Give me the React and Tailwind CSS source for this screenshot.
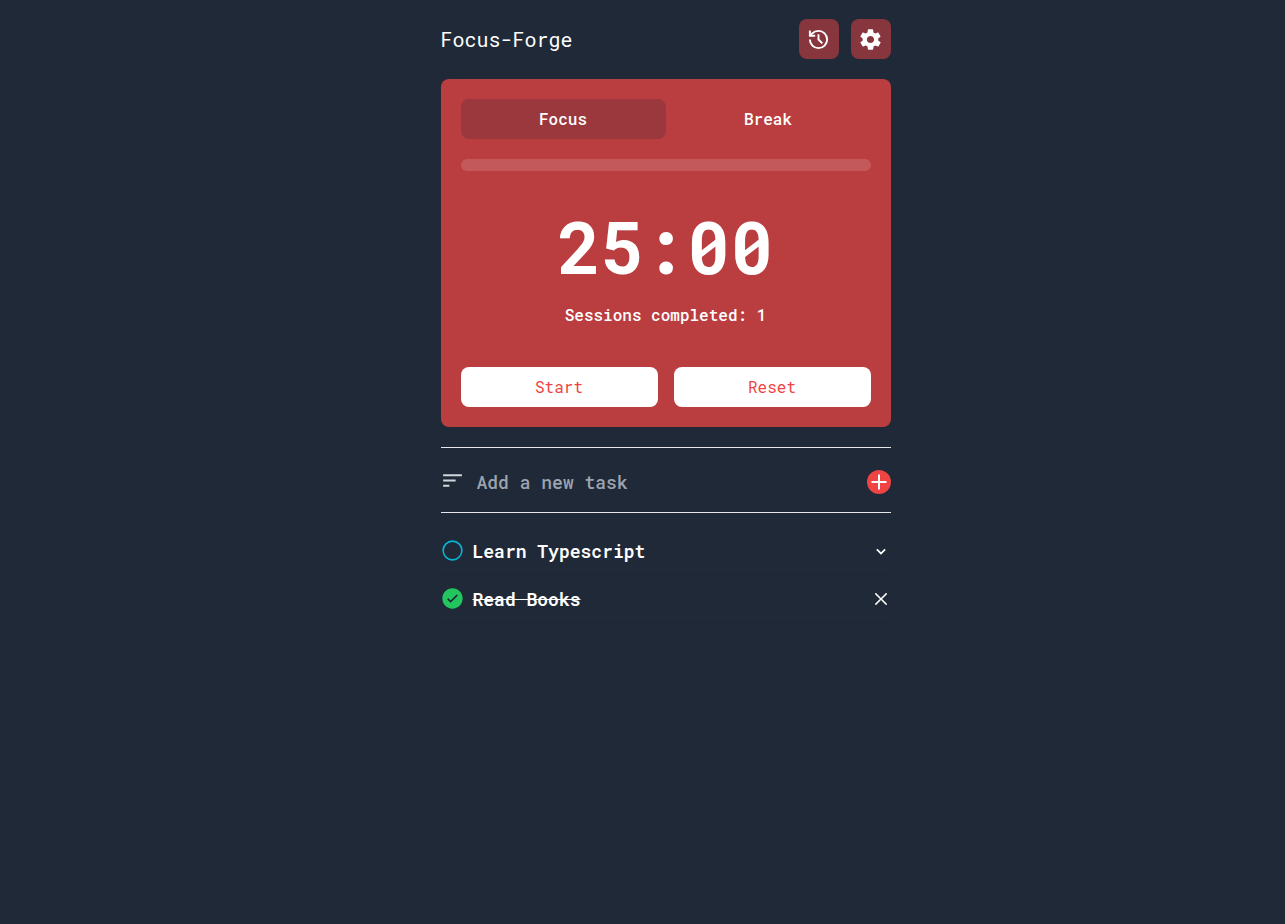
import { useState } from "react";
import { BiChevronDown } from "react-icons/bi";
import { IoIosCheckmarkCircle, IoMdSettings } from "react-icons/io";
import { IoEllipseOutline } from "react-icons/io5";
import { MdSort } from "react-icons/md";
import { RxCross2 } from "react-icons/rx";

const initialTasks = [
  { id: 1, title: "Learn Typescript", done: false },
  { id: 2, title: "Read Books", done: true },
];

function PlusIcon() {
  return (
    <svg viewBox="0 0 24 24" className="size-6" fill="currentColor" aria-hidden="true">
      <path d="M11 4.5h2V11h6.5v2H13v6.5h-2V13H4.5v-2H11z" />
    </svg>
  );
}

function HistoryIcon() {
  return (
    <svg viewBox="0 0 24 24" className="size-[23px]" fill="none" stroke="currentColor" strokeWidth="2" aria-hidden="true">
      <path d="M3 12a9 9 0 1 0 9-9a9.7 9.7 0 0 0-6.7 2.7L3.300 7.700" />
      <path d="M3 2.500V8h5.500" />
      <path d="M12 6.500V12l4 4" />
    </svg>
  );
}

function HeaderButton({ label, children }) {
  return (
    <button type="button" aria-label={label} className="flex size-10 items-center justify-center rounded-lg bg-[#ef4444]/50">
      {children}
    </button>
  );
}

function ModeTab({ active, onClick, children }) {
  return (
    <button
      type="button"
      aria-pressed={active}
      onClick={onClick}
      className={`h-10 flex-1 rounded-lg font-medium ${active ? "bg-[#1f2937]/20" : ""}`}
    >
      {children}
    </button>
  );
}

function TaskRow({ task, onToggle, onRemove }) {
  return (
    <li className="flex h-12 items-center justify-between border-b border-[#1e2634]">
      <div className="flex items-center gap-2">
        <button type="button" aria-label={`Toggle ${task.title}`} onClick={onToggle} className="-ml-px">
          {task.done ? (
            <IoIosCheckmarkCircle className="size-[25px] text-[#22c55e]" />
          ) : (
            <IoEllipseOutline className="size-[25px] text-[#06b6d4]" />
          )}
        </button>
        <span className={`text-lg font-semibold ${task.done ? "line-through" : ""}`}>{task.title}</span>
      </div>
      {task.done ? (
        <button type="button" aria-label={`Remove ${task.title}`} onClick={onRemove}>
          <RxCross2 className="size-5" />
        </button>
      ) : (
        <button type="button" aria-label={`Expand ${task.title}`}>
          <BiChevronDown className="size-5" />
        </button>
      )}
    </li>
  );
}

export default function App() {
  const [mode, setMode] = useState("focus");
  const [tasks, setTasks] = useState(initialTasks);

  const toggle = (id) => setTasks(tasks.map((t) => (t.id === id ? { ...t, done: !t.done } : t)));
  const remove = (id) => setTasks(tasks.filter((t) => t.id !== id));

  return (
    <div className="min-h-screen bg-[#1f2937] pl-[46px] font-['Roboto_Mono','DejaVu_Sans_Mono',monospace] text-white">
      <main className="mx-auto max-w-[450px]">
        <header className="flex items-center justify-between pt-[19px] pb-5">
          <h1 className="text-xl">Focus-Forge</h1>
          <div className="flex gap-3">
            <HeaderButton label="History">
              <HistoryIcon />
            </HeaderButton>
            <HeaderButton label="Settings">
              <IoMdSettings className="size-[25px]" />
            </HeaderButton>
          </div>
        </header>

        <section className="rounded-lg bg-[#ef4444]/75 p-5">
          <div className="flex">
            <ModeTab active={mode === "focus"} onClick={() => setMode("focus")}>Focus</ModeTab>
            <ModeTab active={mode === "break"} onClick={() => setMode("break")}>Break</ModeTab>
          </div>
          <div
            className="mt-5 h-3 rounded-full bg-white/15"
            role="progressbar"
            aria-label="Session progress"
            aria-valuenow={0}
            aria-valuemin={0}
            aria-valuemax={100}
          />
          <p className="mt-10 text-center text-7xl font-bold">25:00</p>
          <p className="mt-5 text-center font-medium">Sessions completed: 1</p>
          <div className="mt-10 flex gap-4">
            <button type="button" className="h-10 flex-1 rounded-lg bg-white text-[#ef4444]">Start</button>
            <button type="button" className="h-10 flex-1 rounded-lg bg-white text-[#ef4444]">Reset</button>
          </div>
        </section>

        <form
          className="mt-5 flex h-[66px] items-center border-y border-gray-200 pt-1"
          onSubmit={(e) => e.preventDefault()}
        >
          <label htmlFor="new-task" className="-ml-px pb-1">
            <MdSort className="size-[25px] text-gray-300" />
          </label>
          <input
            id="new-task"
            type="text"
            aria-label="New task"
            placeholder="Add a new task"
            className="ml-3 min-w-0 flex-1 bg-transparent text-lg font-medium outline-none placeholder:text-[#9ca3af]"
          />
          <button type="submit" aria-label="Add task" className="rounded-full bg-[#ef4444]">
            <PlusIcon />
          </button>
        </form>

        <ul className="mt-3.5">
          {tasks.map((task) => (
            <TaskRow key={task.id} task={task} onToggle={() => toggle(task.id)} onRemove={() => remove(task.id)} />
          ))}
        </ul>
      </main>
    </div>
  );
}
